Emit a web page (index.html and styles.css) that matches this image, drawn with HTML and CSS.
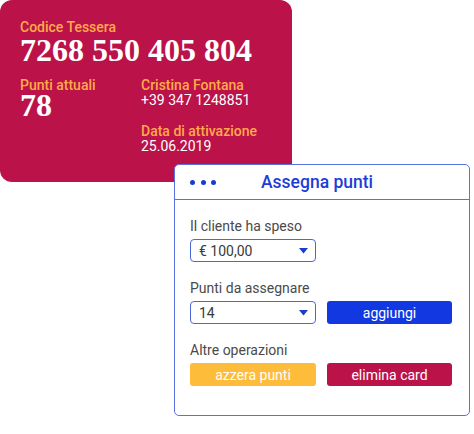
FILE: index.html
```html
<!DOCTYPE html>
<html lang="it">
<head>
    <meta charset="UTF-8">
    <meta name="viewport" content="width=device-width, initial-scale=1.0">
    <title>Tessera punti</title>
    <link rel="stylesheet" href="styles.css">
</head>
<body>
    <div class="card">
        <div class="card-label">Codice Tessera</div>
        <div class="card-code">7268 550 405 804</div>
        <div class="card-row">
            <div>
                <div class="card-label">Punti attuali</div>
                <div class="card-points">78</div>
            </div>
            <div>
                <div class="card-label">Cristina Fontana</div>
                <div class="card-value">+39 347 1248851</div>
                <div class="card-label spaced">Data di attivazione</div>
                <div class="card-value">25.06.2019</div>
            </div>
        </div>
    </div>

    <div class="panel">
        <div class="panel-head">
            <div class="dots"><span></span><span></span><span></span></div>
            <h2>Assegna punti</h2>
        </div>
        <div class="panel-body">
            <div class="group">
                <label>Il cliente ha speso</label>
                <div class="row">
                    <div class="select">
                        <span>€ 100,00</span>
                        <svg width="9" height="6" viewBox="0 0 9 6"><path d="M0 0 H9 L4.5 5.5 Z" fill="#1a3bd3"/></svg>
                    </div>
                </div>
            </div>
            <div class="group">
                <label>Punti da assegnare</label>
                <div class="row">
                    <div class="select">
                        <span>14</span>
                        <svg width="9" height="6" viewBox="0 0 9 6"><path d="M0 0 H9 L4.5 5.5 Z" fill="#1a3bd3"/></svg>
                    </div>
                    <button class="btn blue">aggiungi</button>
                </div>
            </div>
            <div class="group">
                <label>Altre operazioni</label>
                <div class="row">
                    <button class="btn yellow">azzera punti</button>
                    <button class="btn red">elimina card</button>
                </div>
            </div>
        </div>
    </div>
</body>
</html>
```

FILE: styles.css
```css
body{
    margin: 0;
    background: #ffffff;
    font-family: Roboto, "Liberation Sans", sans-serif;
}
.card{
    width: 252px;
    height: 162px;
    padding: 20px 20px 0 20px;
    background-color: #bb1249;
    border-radius: 12px;
}
.card-label{
    color: #ffaa48;
    font-size: 14px;
    font-weight: 500;
    line-height: 15px;
}
.card-label.spaced{
    margin-top: 16px;
}
.card-value{
    color: #ffffff;
    font-size: 14px;
    line-height: 15px;
}
.card-code{
    color: #ffffff;
    font-family: "Liberation Serif", serif;
    font-weight: bold;
    font-size: 32px;
    line-height: 30px;
}
.card-row{
    display: grid;
    grid-template-columns: 121px 1fr;
    margin-top: 13px;
}
.card-points{
    color: #ffffff;
    font-family: "Liberation Serif", serif;
    font-weight: bold;
    font-size: 32px;
    line-height: 22px;
    margin-top: 1px;
}
.panel{
    position: relative;
    width: 294px;
    height: 250px;
    margin-top: -18px;
    margin-left: 174px;
    background: #ffffff;
    border: 1px solid #5a72df;
    border-radius: 5px;
}
.panel-head{
    display: flex;
    align-items: center;
    height: 34px;
    padding-left: 15px;
    border-bottom: 1px solid #5a72df;
}
.dots{
    display: flex;
    gap: 5.5px;
}
.dots span{
    width: 5px;
    height: 5px;
    border-radius: 50%;
    background: #1a3bd3;
}
h2{
    margin: 0 0 0 45px;
    color: #1c3dd6;
    font-size: 17.5px;
    font-weight: 500;
}
.panel-body{
    padding: 19px 16px 0 15px;
}
.group{
    margin-bottom: 19px;
}
label{
    display: block;
    color: #4a4a4a;
    font-size: 14px;
    line-height: 15px;
    margin-bottom: 5px;
}
.row{
    display: grid;
    grid-template-columns: 126px 125px;
    column-gap: 11px;
}
.select{
    display: flex;
    align-items: center;
    justify-content: space-between;
    box-sizing: border-box;
    height: 23px;
    padding: 0 7px 0 8px;
    border: 1.5px solid #4c67dc;
    border-radius: 4px;
    color: #3a3a3a;
    font-size: 14px;
}
.btn{
    height: 23px;
    border: none;
    border-radius: 3px;
    color: #ffffff;
    font-family: Roboto, "Liberation Sans", sans-serif;
    font-size: 14px;
    padding: 0;
}
.blue{
    background-color: #1238e2;
}
.yellow{
    background-color: #fdbc3a;
}
.red{
    background-color: #bb1249;
}
```
